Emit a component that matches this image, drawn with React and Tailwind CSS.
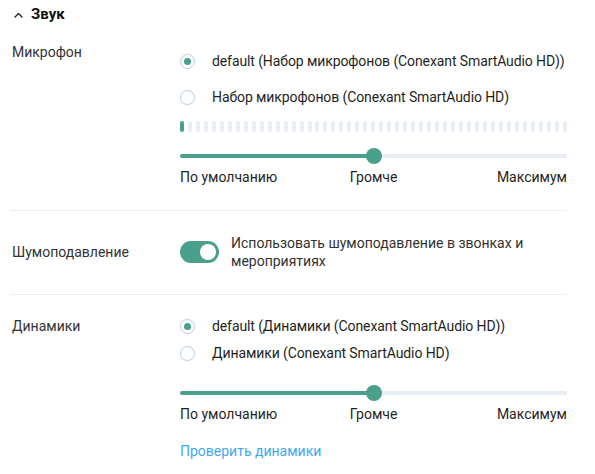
import { useState } from 'react'

const teal = 'bg-[#4a9f8d]'

function Radio({ checked, label, className }) {
  return (
    <div className={`flex items-center gap-[17px] ${className}`}>
      <div className="w-[15px] h-[15px] rounded-full border border-[#b9cde0] flex items-center justify-center flex-shrink-0">
        {checked && <div className="w-[7px] h-[7px] rounded-full bg-[#4a9f8d]" />}
      </div>
      <span className="text-[14px] leading-[18px] text-[#1f1f1f] whitespace-nowrap tracking-[-0.1px]">{label}</span>
    </div>
  )
}

function Slider({ value, className }) {
  return (
    <div className={className}>
      <div className="relative h-[16px] flex items-center">
        <div className="h-[4px] w-full rounded-full bg-[#e7edf3]" />
        <div className="absolute left-0 h-[4px] rounded-full bg-[#4a9f8d]" style={{ width: `${value}%` }} />
        <div
          className="absolute w-[16px] h-[16px] rounded-full bg-[#4a9f8d] -translate-x-1/2"
          style={{ left: `${value}%` }}
        />
      </div>
      <div className="grid grid-cols-3 text-[14px] leading-[18px] text-[#1f1f1f] mt-[4px]">
        <span className="text-left whitespace-nowrap">По умолчанию</span>
        <span className="text-center">Громче</span>
        <span className="text-right">Максимум</span>
      </div>
    </div>
  )
}

function Row({ label, children, className }) {
  return (
    <div className={`flex ${className}`}>
      <div className="w-[180px] pl-3 text-[14px] leading-[18px] text-[#333]">{label}</div>
      <div className="flex-1">{children}</div>
    </div>
  )
}

export default function App() {
  const [noise, setNoise] = useState(true)
  const bars = Array.from({ length: 49 })

  return (
    <div className="w-[595px] h-[474px] bg-white overflow-hidden pr-7" style={{ fontFamily: 'Roboto, "Noto Sans", sans-serif' }}>
      {/* Header */}
      <div className="h-[28px] flex items-center pl-[14px] gap-[8px]">
        <svg width="9" height="6" viewBox="0 0 9 6" fill="none" className="mt-[1px]">
          <path d="M1 5L4.5 1.5L8 5" stroke="#1a1a1a" strokeWidth="1.3" strokeLinecap="round" strokeLinejoin="round" />
        </svg>
        <span className="text-[15px] font-bold text-[#111]">Звук</span>
      </div>

      {/* Microphone */}
      <Row label="Микрофон" className="pt-[15px] pb-[24px]">
        <Radio checked label="default (Набор микрофонов (Conexant SmartAudio HD))" className="h-[36px]" />
        <Radio label="Набор микрофонов (Conexant SmartAudio HD)" className="h-[36px]" />
        <div className="flex justify-between mt-[6px] h-[11px]">
          {bars.map((_, i) => (
            <div key={i} className={`w-[4px] h-full rounded-full ${i === 0 ? teal : 'bg-[#e8eef5]'}`} />
          ))}
        </div>
        <Slider value={50} className="mt-[16px]" />
      </Row>

      <div className="ml-[10px] h-px bg-[#eeeeee]" />

      {/* Noise suppression */}
      <div className="flex items-center pt-[23px] pb-[24px]">
        <div className="w-[180px] pl-3 text-[14px] leading-[18px] text-[#333]">Шумоподавление</div>
        <button
          onClick={() => setNoise(!noise)}
          className={`w-[39px] h-[22px] rounded-full flex items-center px-[3px] flex-shrink-0 ${noise ? 'bg-[#4a9f8d] justify-end' : 'bg-[#d5dde5] justify-start'}`}
        >
          <span className="w-[16px] h-[16px] rounded-full bg-white" />
        </button>
        <div className="ml-[12px] flex-1 text-[14px] leading-[18px] text-[#333]">
          Использовать шумоподавление в звонках и мероприятиях
        </div>
      </div>

      <div className="ml-[10px] h-px bg-[#eeeeee]" />

      {/* Speakers */}
      <Row label={<div className="pt-[5px]">Динамики</div>} className="pt-[17px]">
        <Radio checked label="default (Динамики (Conexant SmartAudio HD))" className="h-[28px]" />
        <Radio label="Динамики (Conexant SmartAudio HD)" className="h-[26px]" />
        <Slider value={50} className="mt-[19px]" />
        <div className="mt-[19px] text-[14px] leading-[18px] text-[#3fa9f0]">Проверить динамики</div>
      </Row>
    </div>
  )
}
